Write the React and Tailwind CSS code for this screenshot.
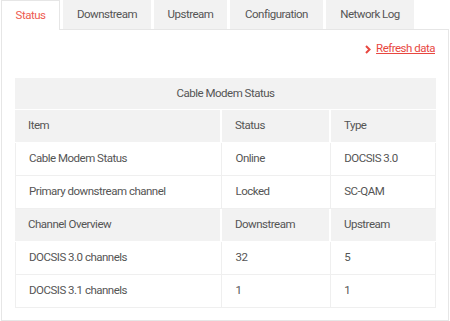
import React from "react";

const tabs = [
  { label: "Status", w: "w-[59px]", active: true },
  { label: "Downstream", w: "w-[88px]" },
  { label: "Upstream", w: "w-[73px]" },
  { label: "Configuration", w: "w-[93px]" },
  { label: "Network Log", w: "w-[88px]" },
];

const rows = [
  { cells: ["Item", "Status", "Type"], gray: true },
  { cells: ["Cable Modem Status", "Online", "DOCSIS 3.0"] },
  { cells: ["Primary downstream channel", "Locked", "SC-QAM"] },
  { cells: ["Channel Overview", "Downstream", "Upstream"], gray: true },
  { cells: ["DOCSIS 3.0 channels", "32", "5"] },
  { cells: ["DOCSIS 3.1 channels", "1", "1"] },
];

const colW = ["w-[207px]", "w-[109px]", "w-[104px]"];

const App = () => {
  return (
    <div
      className="w-[450px] h-[321px] bg-white pl-px text-[11.5px] tracking-[-0.5px] text-[#555]"
      style={{ fontFamily: "Roboto, 'Liberation Sans', sans-serif" }}
    >
      {/* Tabs */}
      <div className="flex items-end gap-[3px] h-[29px]">
        {tabs.map((t) =>
          t.active ? (
            <div
              key={t.label}
              className={`${t.w} h-[30px] -mb-px relative z-10 bg-white border-x border-t border-[#e6e6e6] flex items-center justify-center text-[#ee5a4f]`}
            >
              {t.label}
            </div>
          ) : (
            <div
              key={t.label}
              className={`${t.w} h-[29px] bg-[#f2f2f2] flex items-center justify-center`}
            >
              {t.label}
            </div>
          )
        )}
      </div>

      {/* Panel */}
      <div className="w-[448px] h-[292px] border border-[#e6e6e6] px-[13px]">
        <div className="flex justify-end items-center h-[35px] pt-[2px]">
          <svg width="6" height="9" viewBox="0 0 6 9" className="mr-[5px] mt-px">
            <path d="M1 1l3.5 3.5L1 8" fill="none" stroke="#e8473f" strokeWidth="2" />
          </svg>
          <a href="#" className="text-[#e8473f] underline">
            Refresh data
          </a>
        </div>

        <div className="mt-[13px] w-[421px]">
          <div className="h-[32px] bg-[#f2f2f2] flex items-center justify-center border-b border-white">
            Cable Modem Status
          </div>
          {rows.map((r, i) => (
            <div
              key={i}
              className={`flex h-[33px] ${
                r.gray ? "bg-[#f2f2f2] border-white" : "bg-white border-[#efefef] border-x"
              } border-b`}
            >
              {r.cells.map((c, j) => (
                <div
                  key={j}
                  className={`${colW[j]} flex items-center pl-[13px] ${
                    j < 2 ? (r.gray ? "border-r-2 border-white" : "border-r border-[#efefef]") : ""
                  }`}
                >
                  {c}
                </div>
              ))}
            </div>
          ))}
        </div>
      </div>
    </div>
  );
};

export default App;
